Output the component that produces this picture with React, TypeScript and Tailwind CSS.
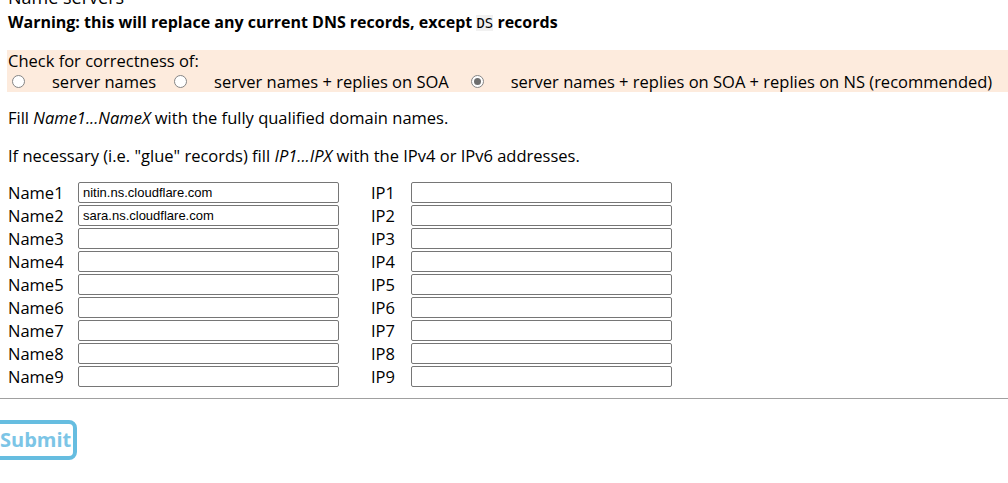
import React from "react";

const rows = [1, 2, 3, 4, 5, 6, 7, 8, 9];

const names: Record<number, string> = {
  1: "nitin.ns.cloudflare.com",
  2: "sara.ns.cloudflare.com",
};

const Radio = ({ checked }: { checked?: boolean }) => (
  <span className="inline-flex h-[13px] w-[13px] items-center justify-center rounded-full border border-[#858585] bg-white">
    {checked && <span className="h-[7px] w-[7px] rounded-full bg-[#6e6e6e]" />}
  </span>
);

export default function App() {
  return (
    <div className="h-[483px] w-[1008px] overflow-hidden bg-white font-['Segoe_UI','Open_Sans',sans-serif] text-[16.5px] text-black">
      <div className="mt-[-14px] px-2 text-[18px] leading-[22px]">Name servers</div>

      <p className="mt-[3px] px-2 text-[16px] font-bold leading-[22px]">
        Warning: this will replace any current DNS records, except{" "}
        <code className="bg-[#f1f1f1] font-['DejaVu_Sans_Mono',monospace] text-[14px] font-normal">DS</code>{" "}
        records
      </p>

      <div className="ml-[7px] mt-[16px] bg-[#fdebdd] pl-[1px] leading-[21px]">
        <div>Check for correctness of:</div>
        <div className="flex items-center">
          <span className="ml-[4px] flex items-center">
            <Radio />
          </span>
          <span className="ml-[27px]">server names</span>
          <span className="ml-[18px] flex items-center">
            <Radio />
          </span>
          <span className="ml-[27px]">server names + replies on SOA</span>
          <span className="ml-[22px] flex items-center">
            <Radio checked />
          </span>
          <span className="ml-[27px]">server names + replies on SOA + replies on NS (recommended)</span>
        </div>
      </div>

      <p className="mt-[15px] px-2 leading-[21px]">
        Fill <i>Name1...NameX</i> with the fully qualified domain names.
      </p>
      <p className="mt-[17px] px-2 leading-[21px]">
        If necessary (i.e. "glue" records) fill <i>IP1...IPX</i> with the IPv4 or IPv6 addresses.
      </p>

      <div className="mt-[16px] flex flex-col gap-[2px] px-2">
        {rows.map((n) => (
          <div key={n} className="flex h-[21px] items-center">
            <span className="w-[70px] leading-[21px]">Name{n}</span>
            <input
              readOnly
              value={names[n] ?? ""}
              className="h-[21px] w-[261px] rounded-[2px] border border-[#767676] bg-white px-[4px] font-['Liberation_Sans',Arial,sans-serif] text-[13px] text-black outline-none"
            />
            <span className="ml-[32px] w-[40px] leading-[21px]">IP{n}</span>
            <input
              readOnly
              value=""
              className="h-[21px] w-[261px] rounded-[2px] border border-[#767676] bg-white px-[4px] font-['Liberation_Sans',Arial,sans-serif] text-[13px] outline-none"
            />
          </div>
        ))}
      </div>

      <hr className="mt-[11px] border-t-[1px] border-[#a0a0a0]" />

      <div className="mt-[21px] ml-[-8px]">
        <button className="h-[40px] rounded-[8px] border-[4px] border-[#66bde0] bg-white pl-[4px] pr-[2px] text-[20px] font-bold leading-[32px] text-[#7cc5e6]">
          Submit
        </button>
      </div>
    </div>
  );
}
